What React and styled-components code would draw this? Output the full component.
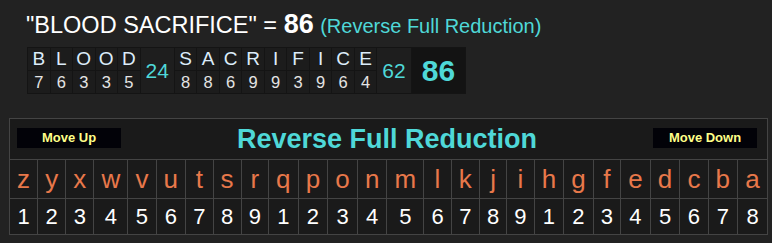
import React from "react";
import styled, { createGlobalStyle } from "styled-components";

const phrase = ["BLOOD", "SACRIFICE"];
const alphabet = "zyxwvutsrqponmlkjihgfedcba".split("");

const reduce = (ch) => {
  const idx = alphabet.indexOf(ch.toLowerCase());
  return (idx % 9) + 1;
};

const GlobalStyle = createGlobalStyle`
  html, body {
    margin: 0;
    padding: 0;
    background: #222222;
    font-family: Arial, "Liberation Sans", sans-serif;
  }
`;

const Page = styled.div`
  padding: 9px 0 0 0;
`;

const Title = styled.div`
  padding-left: 26px;
  font-size: 23.5px;
  color: #ffffff;
  line-height: 30px;
  white-space: nowrap;
`;

const Total = styled.span`
  font-weight: bold;
  font-size: 27px;
`;

const Cipher = styled.span`
  font-size: 20px;
  color: #4fd8d8;
`;

const Breakdown = styled.table`
  margin: 6px 0 0 27px;
  border-collapse: collapse;
  background: #1c1c1c;
`;

const LetterCell = styled.td`
  width: 21.5px;
  height: 22px;
  padding: 0;
  border: 1px solid #141414;
  text-align: center;
  vertical-align: middle;
  font-size: ${(p) => (p.$num ? "16.5px" : "19px")};
  color: ${(p) => (p.$num ? "#e4e4e4" : "#dcecfa")};
`;

const SumCell = styled.td`
  padding: 0 5px;
  min-width: 22px;
  border: 1px solid #141414;
  background: #1e1e1e;
  color: #4fd8d8;
  font-size: 21px;
  text-align: center;
  vertical-align: middle;
`;

const GrandCell = styled.td`
  padding: 0 10px;
  border: 1px solid #141414;
  background: #131313;
  color: #4fd8d8;
  font-size: 30px;
  font-weight: bold;
  text-align: center;
  vertical-align: middle;
`;

const Chart = styled.table`
  margin: 24px 0 0 9px;
  width: 759px;
  border-collapse: collapse;
  background: #1a1a1a;
`;

const HeadCell = styled.td`
  border: 1px solid #444444;
  height: 40px;
  padding: 0 10px 0 7px;
`;

const HeadBar = styled.div`
  display: grid;
  grid-template-columns: 1fr auto 1fr;
  align-items: center;
`;

const MoveButton = styled.div`
  justify-self: ${(p) => (p.$right ? "end" : "start")};
  width: 104px;
  height: 20px;
  margin-top: -2px;
  background: #020208;
  color: #ffff88;
  font-size: 13px;
  font-weight: bold;
  line-height: 20px;
  text-align: center;
`;

const ChartTitle = styled.div`
  color: #4fd8d8;
  font-size: 27px;
  font-weight: bold;
`;

const Cell = styled.td`
  border: 1px solid #444444;
  height: ${(p) => (p.$num ? "35px" : "38px")};
  padding: 0 7px;
  text-align: center;
  vertical-align: middle;
  font-size: ${(p) => (p.$num ? "22px" : "26px")};
  color: ${(p) => (p.$num ? "#ffffff" : "#e8784a")};
`;

export default function App() {
  const sums = phrase.map((w) => w.split("").reduce((a, c) => a + reduce(c), 0));
  const total = sums.reduce((a, b) => a + b, 0);

  return (
    <Page>
      <GlobalStyle />
      <Title>
        "{phrase.join(" ")}" = <Total>{total}</Total>{" "}
        <Cipher>(Reverse Full Reduction)</Cipher>
      </Title>

      <Breakdown>
        <tbody>
          <tr>
            {phrase.map((w, wi) => (
              <React.Fragment key={w}>
                {w.split("").map((c, i) => (
                  <LetterCell key={i}>{c}</LetterCell>
                ))}
                <SumCell rowSpan={2}>{sums[wi]}</SumCell>
              </React.Fragment>
            ))}
            <GrandCell rowSpan={2}>{total}</GrandCell>
          </tr>
          <tr>
            {phrase.map((w) =>
              w.split("").map((c, i) => (
                <LetterCell $num key={w + i}>
                  {reduce(c)}
                </LetterCell>
              ))
            )}
          </tr>
        </tbody>
      </Breakdown>

      <Chart>
        <tbody>
          <tr>
            <HeadCell colSpan={26}>
              <HeadBar>
                <MoveButton>Move Up</MoveButton>
                <ChartTitle>Reverse Full Reduction</ChartTitle>
                <MoveButton $right>Move Down</MoveButton>
              </HeadBar>
            </HeadCell>
          </tr>
          <tr>
            {alphabet.map((c) => (
              <Cell key={c}>{c}</Cell>
            ))}
          </tr>
          <tr>
            {alphabet.map((c) => (
              <Cell $num key={c}>
                {reduce(c)}
              </Cell>
            ))}
          </tr>
        </tbody>
      </Chart>
    </Page>
  );
}
